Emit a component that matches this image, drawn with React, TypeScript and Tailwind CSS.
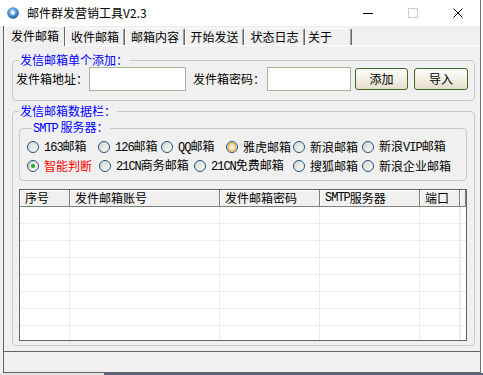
import type { ReactNode } from 'react';

type RadioState = 'checked' | 'hover' | undefined;

interface RadioItem {
  width: string;
  label: ReactNode;
  state?: RadioState;
  red?: boolean;
}

function M({ children }: { children: ReactNode }) {
  return <span className="font-['Liberation_Mono',monospace] text-[12px] tracking-[-1px]">{children}</span>;
}

const tabs = [
  { label: '发件邮箱', width: 'w-[60px]', active: true },
  { label: '收件邮箱', width: 'w-[60px]' },
  { label: '邮箱内容', width: 'w-[60px]' },
  { label: '开始发送', width: 'w-[59px]' },
  { label: '状态日志', width: 'w-[61px]' },
  { label: '关于', width: 'w-[47px]', last: true },
];

const rowOne: RadioItem[] = [
  { width: 'w-[71px]', label: <><M>163</M>邮箱</> },
  { width: 'w-[63px]', label: <><M>126</M>邮箱</> },
  { width: 'w-[65px]', label: <><M>QQ</M>邮箱</> },
  { width: 'w-[67px]', label: '雅虎邮箱', state: 'hover' },
  { width: 'w-[69px]', label: '新浪邮箱' },
  { width: 'w-[90px]', label: <>新浪<M>VIP</M>邮箱</> },
];

const rowTwo: RadioItem[] = [
  { width: 'w-[72px]', label: '智能判断', state: 'checked', red: true },
  { width: 'w-[95px]', label: <><M>21CN</M>商务邮箱</> },
  { width: 'w-[99px]', label: <><M>21CN</M>免费邮箱</> },
  { width: 'w-[69px]', label: '搜狐邮箱' },
  { width: 'w-[90px]', label: '新浪企业邮箱' },
];

const columns = [
  { title: '序号', width: 'w-[50px]' },
  { title: '发件邮箱账号', width: 'w-[150px]' },
  { title: '发件邮箱密码', width: 'w-[100px]' },
  { title: <><M>SMTP</M>服务器</>, width: 'w-[100px]' },
  { title: '端口', width: 'w-[40px]' },
];

function Radio({ state }: { state?: RadioState }) {
  return (
    <svg width="12" height="12" viewBox="0 0 12 12" className="shrink-0">
      <circle cx="6" cy="6" r="5.5" fill="url(#radioFill)" stroke="#1f5283" strokeWidth="1" />
      {state === 'hover' && <circle cx="6" cy="6" r="3.8" fill="none" stroke="#f7b13e" strokeWidth="1.5" />}
      {state === 'checked' && <circle cx="6" cy="6" r="2.1" fill="#2aa82a" />}
    </svg>
  );
}

function RadioRow({ items }: { items: RadioItem[] }) {
  return (
    <div className="flex h-[19px] items-center">
      {items.map((item, i) => (
        <div key={i} className={`${item.width} flex items-center gap-[5px]`}>
          <Radio state={item.state} />
          <span className={`whitespace-nowrap text-[12px] leading-[19px] ${item.red ? 'text-[#ff0000]' : 'text-black'}`}>
            {item.label}
          </span>
        </div>
      ))}
    </div>
  );
}

function TitleBar() {
  return (
    <div className="flex h-[26px] items-center bg-white">
      <svg width="12" height="12" viewBox="0 0 12 12" className="ml-[7px]">
        <defs>
          <radialGradient id="appIcon" cx="0.45" cy="0.4" r="0.65">
            <stop offset="0" stopColor="#f2f8ff" />
            <stop offset="0.4" stopColor="#64aee8" />
            <stop offset="1" stopColor="#14428c" />
          </radialGradient>
        </defs>
        <circle cx="6" cy="6" r="5.8" fill="url(#appIcon)" />
        <circle cx="6" cy="6" r="1.7" fill="#ffffff" />
      </svg>
      <span className="ml-[8px] text-[12px] leading-[16px] text-black">邮件群发营销工具V2.3</span>
      <div className="ml-auto flex h-full">
        <div className="flex w-[45px] items-center justify-center">
          <svg width="10" height="10" viewBox="0 0 10 10">
            <line x1="0" y1="5.5" x2="10" y2="5.5" stroke="#000" strokeWidth="1" />
          </svg>
        </div>
        <div className="flex w-[45px] items-center justify-center">
          <svg width="10" height="10" viewBox="0 0 10 10">
            <rect x="0.5" y="0.5" width="9" height="9" fill="none" stroke="#cccccc" strokeWidth="1" />
          </svg>
        </div>
        <div className="flex w-[45px] items-center justify-center">
          <svg width="10" height="10" viewBox="0 0 10 10">
            <path d="M0.5 0.5 L9.5 9.5 M9.5 0.5 L0.5 9.5" stroke="#000" strokeWidth="1" />
          </svg>
        </div>
      </div>
    </div>
  );
}

function TabStrip() {
  return (
    <div className="flex h-[19px] items-end pl-[1px]">
      {tabs.map((tab) =>
        tab.active ? (
          <div
            key={tab.label}
            className={`${tab.width} relative z-10 -mb-[1px] flex h-[20px] items-center justify-center rounded-t-[2px] border-l border-t border-r border-l-white border-t-white border-r-[#696969] bg-[#f0f0f0] pb-[1px] text-[12px] leading-[16px]`}
          >
            {tab.label}
          </div>
        ) : (
          <div
            key={tab.label}
            className={`${tab.width} flex h-[17px] items-center rounded-t-[2px] border-l border-t border-r border-l-white border-t-white border-r-[#696969] shadow-[inset_-1px_0_0_#a0a0a0] text-[12px] leading-[16px] ${tab.last ? 'justify-start pl-[2px]' : 'justify-center'}`}
          >
            {tab.label}
          </div>
        )
      )}
    </div>
  );
}

function SenderTable() {
  const rows = Array.from({ length: 8 }, (_, i) => i);
  return (
    <div className="ml-[6px] mt-[8px] flex h-[152px] w-[448px] flex-col overflow-hidden border border-[#646464] bg-white">
      <div className="flex h-[17px] shrink-0">
        {columns.map((col, i) => (
          <div
            key={i}
            className={`${col.width} flex items-center border-b border-r border-[#7f7f7f] bg-[#f0f0f0] pl-[5px] text-[12px] leading-[16px] shadow-[inset_1px_1px_0_#ffffff]`}
          >
            {col.title}
          </div>
        ))}
        <div className="flex-1 border-b border-r border-[#7f7f7f] bg-[#f0f0f0] shadow-[inset_1px_1px_0_#ffffff]" />
      </div>
      {rows.map((r) => (
        <div key={r} className="flex h-[17px] shrink-0 border-b border-[#ececec]">
          {columns.map((col, i) => (
            <div key={i} className={`${col.width} border-r border-[#ececec]`} />
          ))}
          <div className="w-[1px] border-r border-[#ececec]" />
        </div>
      ))}
    </div>
  );
}

export default function App() {
  return (
    <div className="relative h-[375px] w-[483px] overflow-hidden bg-white font-['Noto_Sans_CJK_SC','Noto_Sans',sans-serif] text-black">
      <svg width="0" height="0" className="absolute">
        <defs>
          <linearGradient id="radioFill" x1="0" y1="0" x2="1" y2="1">
            <stop offset="0" stopColor="#d2d2ca" />
            <stop offset="1" stopColor="#ffffff" />
          </linearGradient>
        </defs>
      </svg>

      <div className="flex h-[373px]">
        <div className="flex w-[480px] flex-col">
          <TitleBar />

          <div className="flex-1 bg-[#f0f0f0] pl-[3px]">
            <div className="flex h-[347px] flex-col border-b border-l border-[#646464]">
              <TabStrip />

              <div className="flex-1 border-t border-white pl-[8px]">
                <fieldset className="mt-[7px] h-[48px] w-[463px] rounded-[4px] border border-[#c9c9c9] pb-[9px]">
                  <legend className="ml-[6px] px-[1px] text-[12px] leading-[14px] text-[#0000ff]">发信邮箱单个添加：</legend>
                  <div className="flex h-[24px] items-center pl-[3px]">
                    <span className="w-[73px] whitespace-nowrap text-[12px] leading-[16px]">发件箱地址：</span>
                    <div className="h-[24px] w-[97px] border border-[#a3b99a] bg-white" />
                    <span className="ml-[7px] w-[74px] whitespace-nowrap text-[12px] leading-[16px]">发件箱密码：</span>
                    <div className="h-[24px] w-[84px] border border-[#a3b99a] bg-white" />
                    <button className="ml-[4px] h-[22px] w-[53px] rounded-[3px] border border-[#3e6b21] bg-linear-to-b from-[#fefefe] to-[#e6dfcc] text-[12px] leading-[16px]">
                      添加
                    </button>
                    <button className="ml-[6px] h-[22px] w-[54px] rounded-[3px] border border-[#3e6b21] bg-linear-to-b from-[#fefefe] to-[#e6dfcc] text-[12px] leading-[16px]">
                      导入
                    </button>
                  </div>
                </fieldset>

                <fieldset className="mt-[3px] w-[463px] rounded-[4px] border border-[#c9c9c9] pb-[4px]">
                  <legend className="ml-[6px] px-[1px] text-[12px] leading-[14px] text-[#0000ff]">发信邮箱数据栏：</legend>

                  <fieldset className="ml-[6px] mt-[2px] w-[448px] rounded-[4px] border border-[#c9c9c9] pb-[5px] pl-[7px] pt-[1px]">
                    <legend className="ml-[5px] px-[1px] text-[12px] leading-[14px] text-[#0000ff]">
                      <M>SMTP</M> 服务器：
                    </legend>
                    <RadioRow items={rowOne} />
                    <RadioRow items={rowTwo} />
                  </fieldset>

                  <SenderTable />
                </fieldset>
              </div>

              <div className="h-[21px] border-t border-[#646464]" />
            </div>
          </div>
        </div>
        <div className="w-[1px] bg-[#6f6f6f]" />
      </div>

      <div className="flex h-[2px]">
        <div className="w-[104px] bg-[#e4e4e4]" />
        <div className="flex-1 bg-[#56637a]" />
      </div>
    </div>
  );
}
